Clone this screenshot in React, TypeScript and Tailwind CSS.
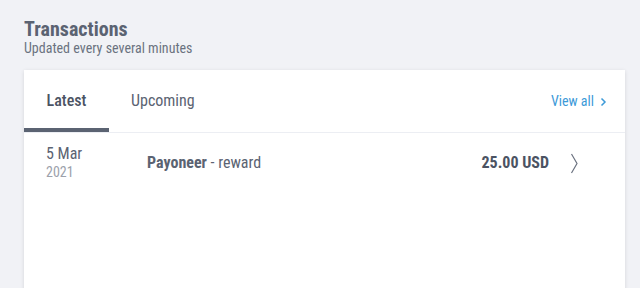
import React from 'react';

const App: React.FC = () => {
  return (
    <div
      className="w-[640px] h-[288px] overflow-hidden bg-[#f1f2f6] font-stretch-condensed"
      style={{ fontFamily: 'Roboto, "Liberation Sans", sans-serif' }}
    >
      {/* Header */}
      <div className="pl-6 pt-[18px]">
        <h1 className="text-[20px] leading-[22px] font-bold text-[#5b6372]">Transactions</h1>
        <p className="text-[14px] leading-[16px] text-[#6b7280]">Updated every several minutes</p>
      </div>

      {/* Card */}
      <div className="ml-6 mr-[15px] mt-[14px] h-[220px] bg-white shadow-[0_1px_4px_rgba(0,0,0,0.12)]">
        {/* Tabs */}
        <div className="flex justify-between border-b border-[#eceef3] h-[63px]">
          <div className="flex">
            <div className="w-[85px] h-[62px] flex items-center justify-center border-b-4 border-[#5b6372] pt-[3px]">
              <span className="text-[16px] font-medium text-[#4b5363]">Latest</span>
            </div>
            <div className="h-[62px] flex items-center pl-[22px]">
              <span className="text-[16px] text-[#5b6372]">Upcoming</span>
            </div>
          </div>
          <div className="h-[62px] flex items-center pr-[18px] text-[#3d9ad8] text-[14px]">
            <span>View all</span>
            <svg className="ml-[6px] mt-[1px]" width="7" height="10" viewBox="0 0 7 10" fill="none">
              <path d="M1.5 1.5 L5 5 L1.5 8.5" stroke="#3d9ad8" strokeWidth="1.5" />
            </svg>
          </div>
        </div>

        {/* Row */}
        <div className="flex items-center h-[60px]">
          <div className="w-[123px] pl-[22px] flex flex-col">
            <span className="text-[16px] leading-[19px] text-[#5b6372]">5 Mar</span>
            <span className="text-[14px] leading-[19px] text-[#9ca1ab]">2021</span>
          </div>
          <div className="flex-1 text-[16px] text-[#5b6372]">
            <span className="font-bold">Payoneer</span> - reward
          </div>
          <div className="text-[16px] font-bold text-[#4b5363]">25.00 USD</div>
          <div className="ml-[21px] mr-[46px] flex">
            <svg width="9" height="21" viewBox="0 0 9 21" fill="none">
              <path d="M1.5 1 L7 10.5 L1.5 20" stroke="#6b7280" strokeWidth="1.2" />
            </svg>
          </div>
        </div>
      </div>
    </div>
  );
};

export default App;
